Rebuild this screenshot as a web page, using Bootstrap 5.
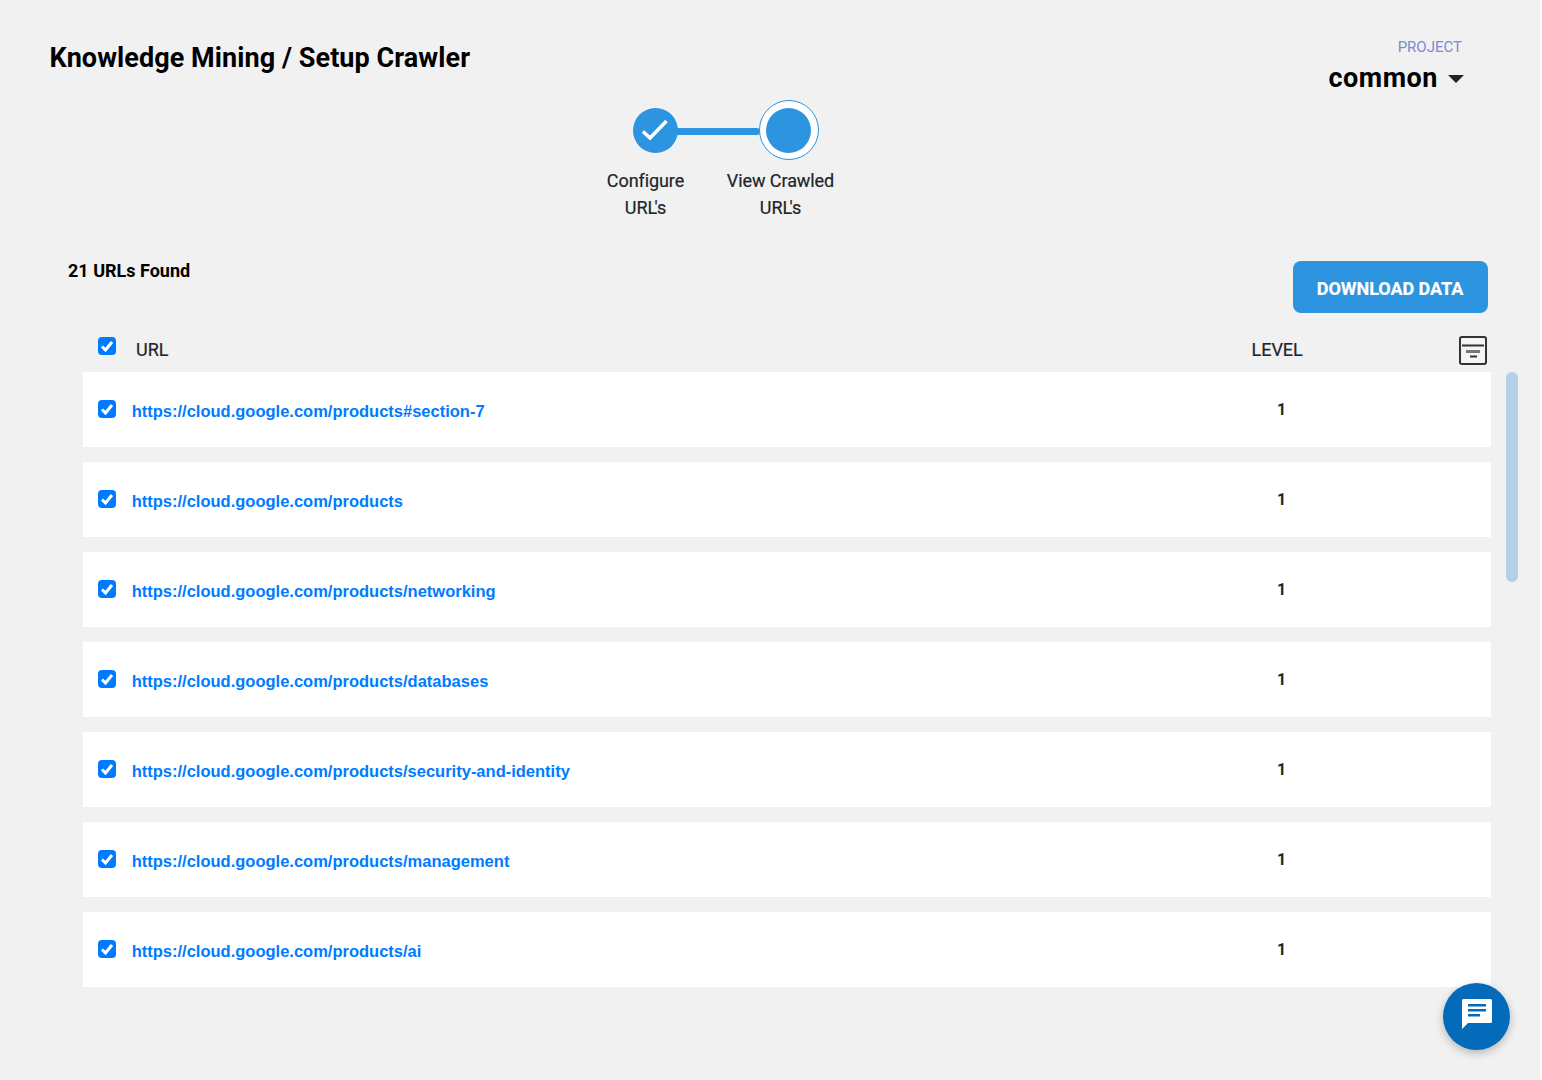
<!DOCTYPE html>
<html lang="en">
<head>
<meta charset="utf-8">
<title>Setup Crawler</title>
<link rel="stylesheet" href="https://cdn.jsdelivr.net/npm/bootstrap@5.3.0/dist/css/bootstrap.min.css">
<style>
html,body{height:1080px;overflow:hidden;background:#fff}
body{font-family:Roboto,sans-serif;color:#212529}
.shell{width:1540px;height:1080px;background:#f1f1f1;position:relative;overflow:hidden}
.head-band{height:100px;padding:39px 76px 0 50px}
.page-title{font-size:27px;line-height:38px;font-weight:700;color:#000;margin:0;letter-spacing:.07px;margin-left:-.5px}
.proj-label{font-size:15px;line-height:16px;color:#7b8bd0;text-align:right;margin-right:2px}
.proj-name{font-size:27px;line-height:32px;font-weight:700;color:#000;letter-spacing:.5px;margin-top:7px}
.proj-caret{width:0;height:0;border-left:8px solid transparent;border-right:8px solid transparent;border-top:8px solid #222;margin-left:10px;margin-top:9px}
.stepper{margin-left:578px;width:283px;height:150px}
.step-track{height:60px;padding-left:55px}
.step-done{width:45px;height:45px;border-radius:50%;background:#2d94e0;flex:none}
.step-line{width:83px;height:7px;background:#2d94e0;border-radius:0 4px 4px 0;margin-left:-1px;margin-top:3px;flex:none}
.step-now{width:60px;height:60px;border-radius:50%;border:1px solid #2d94e0;background:#fff;margin-left:-1px;flex:none}
.step-now span{width:45px;height:45px;border-radius:50%;background:#2d94e0;display:block;margin-right:1px}
.step-labels{padding-top:7px}
.step-text{font-size:18px;line-height:27px;text-align:center;color:#212529;width:135px;letter-spacing:-.08px;-webkit-text-stroke:.2px #212529}
.kern-l{letter-spacing:-2.5px}
.found-row{height:88px;padding:10px 52px 0 68px}
.found-text{font-size:18px;line-height:22px;font-weight:700;color:#000}
.dl-btn{width:195px;height:52px;background:#2d94e0;color:#fff;border:0;border-radius:8px;font-size:18px;font-weight:700;padding:3px 1px 0 0;letter-spacing:-.05px;margin-top:1px;-webkit-text-stroke:.2px #fff}
.dl-btn:hover{background:#2d94e0;color:#fff}
.col-head{height:34px;margin-left:83px;width:1408px;padding-left:15px;position:relative}
.tick{width:18px;height:18px;margin:0;flex:none;border-radius:4px;border:0}
.tick:checked{background-color:#007bff;background-size:18px 18px;background-image:url("data:image/svg+xml,%3csvg xmlns='http://www.w3.org/2000/svg' viewBox='0 0 18 18'%3e%3cpath fill='none' stroke='%23fff' stroke-width='3' d='M4 9.500l3.500 3.500 6.500-8'/%3e%3c/svg%3e")}
.head-tick{margin-top:-1px}
.head-url{font-size:18px;margin-left:20px;color:#212529;line-height:22px;margin-top:1px;-webkit-text-stroke:.2px #212529}
.head-level{font-size:18px;line-height:22px;color:#212529;margin-left:1083px;margin-top:1px;-webkit-text-stroke:.2px #212529}
.filter-box{width:28px;height:29px;border:2px solid #333;border-radius:3px;margin-left:156px;margin-top:-2px;background:#f5f5f5;flex:none}
.list-wrap{height:618px;overflow:hidden;margin-left:83px}
.url-list{width:1408px;flex:none}
.url-row{height:75px;background:#fff;margin-bottom:15px;padding-left:15px;position:relative}
.row-tick{position:relative;top:-1px}
.url-link{font-family:"Liberation Sans",Arial,sans-serif;font-size:16.5px;font-weight:700;color:#007bff;text-decoration:none;margin-left:15.700px;line-height:20px;position:relative;top:1px}
.url-level{font-size:16px;line-height:20px;font-weight:700;color:#212529;position:absolute;left:1194px;top:28px;width:8px}
.rail{width:12px;margin-left:15px;flex:none}
.rail-thumb{height:210px;background:#b5cfe9;border-radius:6px}
.chat-fab{position:absolute;left:1443px;top:983px;width:67px;height:67px;border-radius:50%;background:#036bb9;box-shadow:0 3px 8px rgba(0,0,0,.25);padding-bottom:5px}
</style>
</head>
<body>
<div class="shell">
  <div class="head-band d-flex justify-content-between">
    <h1 class="page-title">Knowledge Mining / Setup Crawler</h1>
    <div>
      <div class="proj-label">PROJECT</div>
      <div class="d-flex align-items-center"><span class="proj-name">common</span><span class="proj-caret"></span></div>
    </div>
  </div>
  <div class="stepper">
    <div class="step-track d-flex align-items-center">
      <div class="step-done d-flex align-items-center justify-content-center">
        <svg width="30" height="30" viewBox="0 0 30 30"><path d="M2 16.500 L9 23 L25.500 6" fill="none" stroke="#fff" stroke-width="3.500"/></svg>
      </div>
      <div class="step-line"></div>
      <div class="step-now d-flex align-items-center justify-content-center"><span></span></div>
    </div>
    <div class="step-labels d-flex">
      <div class="step-text">Configure<br>UR<span class="kern-l">L</span>'s</div>
      <div class="step-text">View Crawled<br>UR<span class="kern-l">L</span>'s</div>
    </div>
  </div>
  <div class="found-row d-flex justify-content-between align-items-start">
    <div class="found-text">21 URLs Found</div>
    <button class="btn dl-btn" type="button">DOWNLOAD DATA</button>
  </div>
  <div class="col-head d-flex align-items-start">
    <input class="form-check-input tick head-tick" type="checkbox" checked aria-label="Select all">
    <span class="head-url">URL</span>
    <span class="head-level">LEVEL</span>
    <span class="filter-box d-flex align-items-center justify-content-center">
      <svg width="24" height="25" viewBox="0 0 24 25"><path d="M1 7.500h22" stroke="#333" stroke-width="2"/><path d="M5 13.500h14" stroke="#777" stroke-width="3"/><path d="M9 18.500h7" stroke="#333" stroke-width="2"/></svg>
    </span>
  </div>
  <div class="list-wrap d-flex">
    <div class="url-list">
      <div class="url-row d-flex align-items-center"><input class="form-check-input tick row-tick" type="checkbox" checked aria-label="Select"><a class="url-link" href="#">https://cloud.google.com/products#section-7</a><span class="url-level">1</span></div>
      <div class="url-row d-flex align-items-center"><input class="form-check-input tick row-tick" type="checkbox" checked aria-label="Select"><a class="url-link" href="#">https://cloud.google.com/products</a><span class="url-level">1</span></div>
      <div class="url-row d-flex align-items-center"><input class="form-check-input tick row-tick" type="checkbox" checked aria-label="Select"><a class="url-link" href="#">https://cloud.google.com/products/networking</a><span class="url-level">1</span></div>
      <div class="url-row d-flex align-items-center"><input class="form-check-input tick row-tick" type="checkbox" checked aria-label="Select"><a class="url-link" href="#">https://cloud.google.com/products/databases</a><span class="url-level">1</span></div>
      <div class="url-row d-flex align-items-center"><input class="form-check-input tick row-tick" type="checkbox" checked aria-label="Select"><a class="url-link" href="#">https://cloud.google.com/products/security-and-identity</a><span class="url-level">1</span></div>
      <div class="url-row d-flex align-items-center"><input class="form-check-input tick row-tick" type="checkbox" checked aria-label="Select"><a class="url-link" href="#">https://cloud.google.com/products/management</a><span class="url-level">1</span></div>
      <div class="url-row d-flex align-items-center"><input class="form-check-input tick row-tick" type="checkbox" checked aria-label="Select"><a class="url-link" href="#">https://cloud.google.com/products/ai</a><span class="url-level">1</span></div>
    </div>
    <div class="rail"><div class="rail-thumb"></div></div>
  </div>
  <div class="chat-fab d-flex align-items-center justify-content-center">
    <svg width="30" height="30" viewBox="0 0 30 30"><path d="M1.500 0h27A1.500 1.500 0 0 1 30 1.500v21a1.500 1.500 0 0 1-1.500 1.500H6l-6 6V1.500A1.500 1.500 0 0 1 1.500 0z" fill="#fff"/><path d="M6 5h18v2.500H6zM6 10h18v2.500H6zM6 15h12v2.500H6z" fill="#036bb9"/></svg>
  </div>
</div>
<script src="https://cdn.jsdelivr.net/npm/bootstrap@5.3.0/dist/js/bootstrap.bundle.min.js"></script>
</body>
</html>
